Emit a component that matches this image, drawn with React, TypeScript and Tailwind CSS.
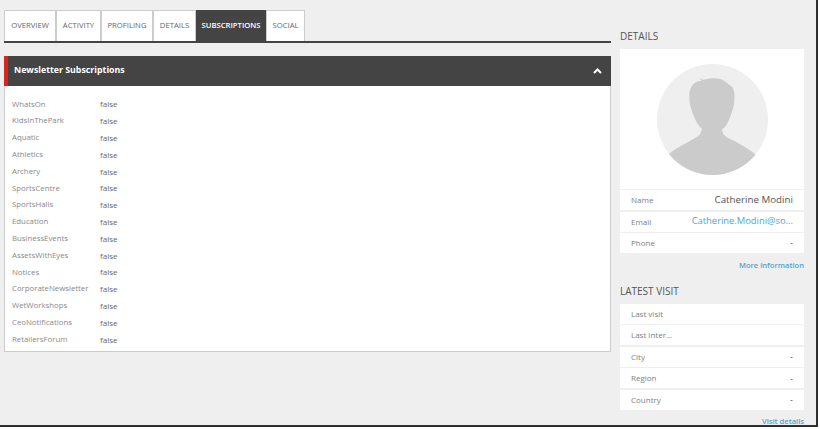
import React from "react";

const tabs: [string, number][] = [["OVERVIEW", 52], ["ACTIVITY", 45], ["PROFILING", 52], ["DETAILS", 43], ["SUBSCRIPTIONS", 70], ["SOCIAL", 39]];
const subs = ["WhatsOn","KidsInThePark","Aquatic","Athletics","Archery","SportsCentre","SportsHalls","Education","BusinessEvents","AssetsWithEyes","Notices","CorporateNewsletter","WetWorkshops","CeoNotifications","RetailersForum"];

function Row({ label, value, link, strong }: { label: string; value?: string; link?: boolean; strong?: boolean }) {
  return (
    <div className="flex h-[20px] items-center justify-between bg-white pl-[11px] pr-[11px]">
      <span className="text-[8px] text-[#808080]">{label}</span>
      {value && <span className={link ? "text-[9.4px] text-[#4aa8d0]" : strong ? "text-[9.75px] text-[#555]" : "text-[9px] text-[#555]"}>{value}</span>}
    </div>
  );
}

export default function App() {
  return (
    <div className="h-[429px] w-[820px] overflow-hidden bg-white" style={{ fontFamily: '"Open Sans", sans-serif' }}>
      <div className="flex h-[427px] w-[818px] border-r-2 border-b-2 border-[#2e2e2e] bg-[#efefef] pl-[4px] pt-[10px]">
        <div className="w-[607px]">
          <div className="flex h-[33px] border-b-2 border-[#444]">
            {tabs.map(([t, w]) => (
              <div
                key={t}
                style={{ width: w }}
                className={
                  t === "SUBSCRIPTIONS"
                    ? "flex h-[31px] items-center justify-center bg-[#444] text-[7.7px] font-semibold text-white"
                    : "flex h-[31px] items-center justify-center border border-b-0 border-[#ccc] bg-white text-[7.7px] text-[#666]"
                }
              >
                {t}
              </div>
            ))}
          </div>
          <div className="mt-[13px] flex h-[30px] items-center justify-between border-l-[4px] border-[#d9261c] bg-[#444] pl-[6px] pr-[9px]">
            <span className="text-[8.8px] font-bold text-white">Newsletter Subscriptions</span>
            <svg width="9" height="6" viewBox="0 0 9 6" fill="none" stroke="#fff" strokeWidth="2"><path d="M1 5 L4.5 1.5 L8 5" /></svg>
          </div>
          <div className="h-[266px] border border-t-0 border-[#ccc] bg-white pl-[7px] pt-[10px]">
            {subs.map((s) => (
              <div key={s} className="flex h-[16.8px] items-center">
                <span className="w-[88px] text-[7.8px] text-[#888]">{s}</span>
                <span className="text-[8px] text-[#666]">false</span>
              </div>
            ))}
          </div>
        </div>
        <div className="ml-[9px] w-[184px]">
          <div className="flex h-[39px] items-center pt-[13px] text-[10px] text-[#555]">DETAILS</div>
          <div className="flex h-[140px] items-center justify-center bg-white">
            <svg width="111" height="111" viewBox="0 0 111 111">
              <defs><clipPath id="c"><circle cx="55.5" cy="55.5" r="55.5" /></clipPath></defs>
              <circle cx="55.5" cy="55.5" r="55.5" fill="#efefef" />
              <path clipPath="url(#c)" d="M43 14 L46 16 C52 14 58 14 63 15 C68 16 71 20 74 22 C78 25 78 32 77 40 C76 46 73 54 70 60 C68 63 66 65 65 65 C65 69 67 72 71 74 C80 78 90 84 98 90 L98 111 L10 111 L12 90 C20 83 30 79 38 74 C43 72 44 69 45 65 C41 62 36 52 34 44 C32 38 32 30 33 26 C35 20 39 17 44 17 Z" fill="#cbcbcb" />
            </svg>
          </div>
          <div className="mt-[1px] flex flex-col gap-[1.5px]">
            <Row label="Name" value="Catherine Modini" strong />
            <Row label="Email" value="Catherine.Modini@so..." link />
            <Row label="Phone" value="-" />
          </div>
          <div className="mt-[7px] text-right text-[7.6px] font-semibold text-[#4aa8d0]">More information</div>
          <div className="mt-[13px] text-[10px] leading-[14px] text-[#555]">LATEST VISIT</div>
          <div className="mt-[5.5px] flex flex-col gap-[1.5px]">
            <Row label="Last visit" />
            <Row label="Last inter..." />
            <Row label="City" value="-" />
            <Row label="Region" value="-" />
            <Row label="Country" value="-" />
          </div>
          <div className="mt-[6px] text-right text-[7.6px] font-semibold text-[#4aa8d0]">Visit details</div>
        </div>
      </div>
    </div>
  );
}
